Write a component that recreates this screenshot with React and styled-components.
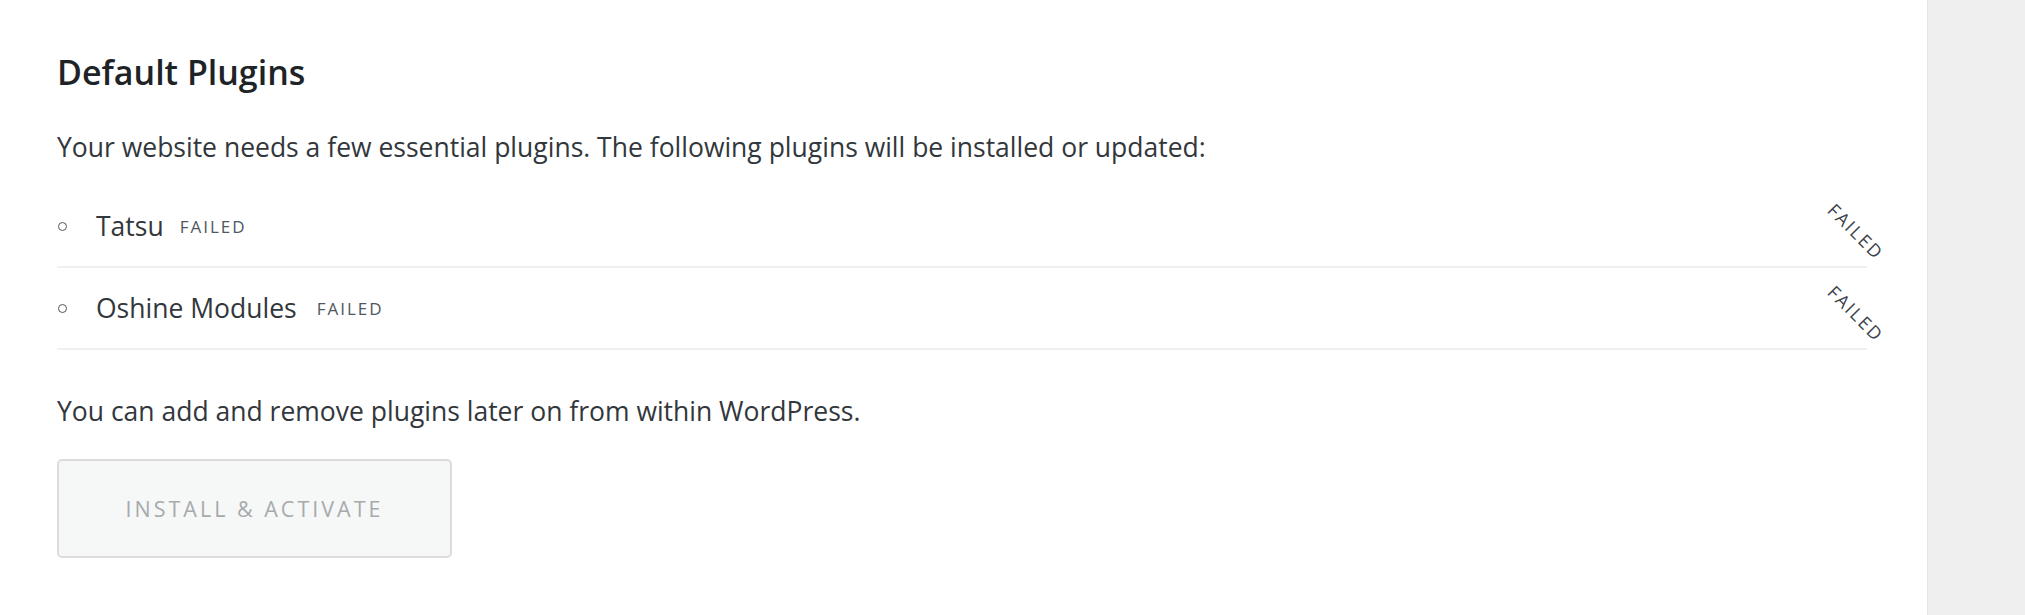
import React from "react";
import styled, { createGlobalStyle } from "styled-components";

const GlobalStyle = createGlobalStyle`
  html, body {
    margin: 0;
    padding: 0;
    background: #ffffff;
  }
  body {
    font-family: "Open Sans", "Noto Sans", sans-serif;
    color: #32373c;
  }
`;

const Page = styled.div`
  display: flex;
  min-height: 615px;
`;

const Main = styled.main`
  flex: 1;
  padding: 52px 60px 40px 57px;
  background: #ffffff;
`;

const Sidebar = styled.aside`
  width: 97px;
  background: #efefef;
  border-left: 1px solid #e4e4e4;
`;

const Title = styled.h2`
  margin: 0 0 37px;
  font-size: 34px;
  font-weight: 600;
  line-height: 40px;
  color: #1e2327;
`;

const Text = styled.p`
  margin: 0;
  font-size: 26.5px;
  line-height: 36px;
  color: #32373c;
`;

const List = styled.ul`
  list-style: none;
  margin: 21px 0 43px;
  padding: 0;
`;

const Item = styled.li`
  position: relative;
  display: flex;
  align-items: center;
  height: 80px;
  border-bottom: 2px solid #f0f0f0;
`;

const Bullet = styled.span`
  width: 9px;
  height: 9px;
  border: 1.5px solid #555;
  border-radius: 50%;
  margin: 0 29px 0 1px;
  box-sizing: border-box;
`;

const Name = styled.span`
  font-size: 26.5px;
  color: #32373c;
`;

const Status = styled.span`
  margin-left: ${(props) => (props.tight ? "16px" : "20px")};
  font-size: 17px;
  letter-spacing: 2px;
  text-transform: uppercase;
  color: #50575e;
`;

const Corner = styled.span`
  position: absolute;
  right: -24px;
  top: 50%;
  transform: translateY(-28%) rotate(45deg);
  font-size: 18px;
  letter-spacing: 2px;
  color: #3c434a;
`;

const Button = styled.button`
  margin-top: 30px;
  width: 395px;
  height: 99px;
  border: 2px solid #dcdcde;
  border-radius: 5px;
  background: #f6f7f7;
  color: #a7aaad;
  font-family: "Open Sans", "Noto Sans", sans-serif;
  font-size: 21.5px;
  letter-spacing: 3px;
  text-transform: uppercase;
`;

const plugins = [
  { name: "Tatsu", status: "Failed", tight: true },
  { name: "Oshine Modules", status: "Failed" },
];

export default function App() {
  return (
    <>
      <GlobalStyle />
      <Page>
        <Main>
          <Title>Default Plugins</Title>
          <Text>
            Your website needs a few essential plugins. The following plugins will
            be installed or updated:
          </Text>
          <List>
            {plugins.map((p) => (
              <Item key={p.name}>
                <Bullet />
                <Name>{p.name}</Name>
                <Status tight={p.tight}>{p.status}</Status>
                <Corner>FAILED</Corner>
              </Item>
            ))}
          </List>
          <Text>You can add and remove plugins later on from within WordPress.</Text>
          <Button disabled>Install &amp; Activate</Button>
        </Main>
        <Sidebar />
      </Page>
    </>
  );
}
